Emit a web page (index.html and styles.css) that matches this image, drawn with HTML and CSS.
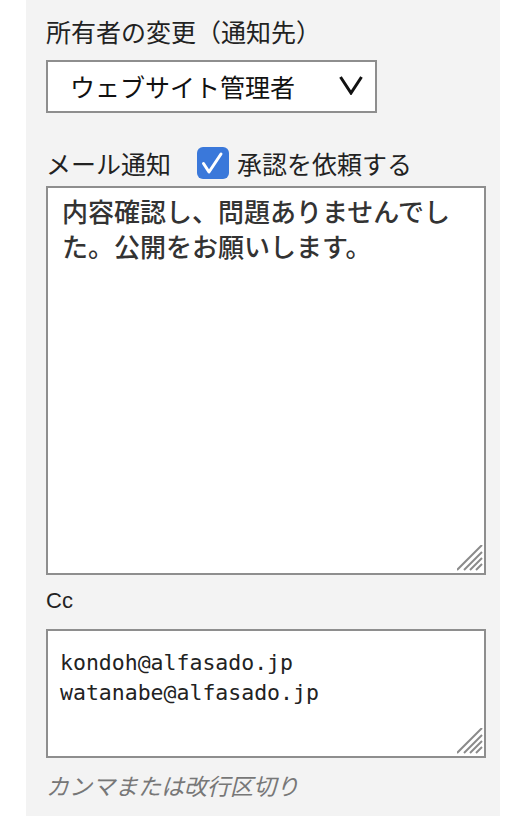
FILE: index.html
```html
<!DOCTYPE html>
<html lang="ja">

<head>
    <meta charset="UTF-8">
    <meta name="viewport" content="width=device-width, initial-scale=1.0">
    <title>所有者の変更</title>
    <link rel="stylesheet" href="styles.css">
</head>

<body>
    <div class="panel">
        <label class="field-label" for="owner">所有者の変更（通知先）</label>
        <div class="select-wrap">
            <select id="owner" name="owner">
                <option value="webmaster">ウェブサイト管理者</option>
            </select>
            <svg class="chevron" width="24" height="20" viewBox="0 0 24 20">
                <polyline points="1.5,2 12,18 22.5,2" fill="none" stroke="#111" stroke-width="3" />
            </svg>
        </div>

        <div class="notify-row">
            <span class="field-label">メール通知</span>
            <label class="check" for="request">
                <input type="checkbox" id="request" name="request" checked>
                <span class="check-box">
                    <svg width="32" height="32" viewBox="0 0 32 32">
                        <polyline points="6.5,16.5 12,25 24,7" fill="none" stroke="#fff" stroke-width="3" stroke-linecap="round" stroke-linejoin="round" />
                    </svg>
                </span>
                <span>承認を依頼する</span>
            </label>
        </div>

        <div class="area-wrap">
            <textarea id="message" name="message" class="message">内容確認し、問題ありませんでした。公開をお願いします。</textarea>
            <svg class="grip" width="26" height="26" viewBox="0 0 26 26">
                <g stroke="#8a8a8a" stroke-width="2">
                    <line x1="0" y1="25" x2="25" y2="0" />
                    <line x1="7" y1="25" x2="25" y2="7" />
                    <line x1="13" y1="25" x2="25" y2="13" />
                    <line x1="19" y1="25" x2="25" y2="19" />
                </g>
            </svg>
        </div>

        <label class="cc-label" for="cc">Cc</label>
        <div class="area-wrap">
            <textarea id="cc" name="cc" class="cc">kondoh@alfasado.jp
watanabe@alfasado.jp</textarea>
            <svg class="grip" width="26" height="26" viewBox="0 0 26 26">
                <g stroke="#8a8a8a" stroke-width="2">
                    <line x1="0" y1="25" x2="25" y2="0" />
                    <line x1="7" y1="25" x2="25" y2="7" />
                    <line x1="13" y1="25" x2="25" y2="13" />
                    <line x1="19" y1="25" x2="25" y2="19" />
                </g>
            </svg>
        </div>
        <p class="hint">カンマまたは改行区切り</p>
    </div>
</body>

</html>
```

FILE: styles.css
```css
body {
    margin: 0;
    padding: 0;
    background: #fff;
    font-family: "Noto Sans CJK JP", "Liberation Sans", sans-serif;
    color: #222;
}

.panel {
    margin-left: 26px;
    width: 434px;
    min-height: 801px;
    padding: 15px 20px 0;
    background: #f3f3f3;
}

.field-label {
    display: block;
    font-size: 25px;
    line-height: 32px;
    color: #222;
}

.select-wrap {
    position: relative;
    width: 331px;
    margin-top: 13px;
}

.select-wrap select {
    appearance: none;
    -webkit-appearance: none;
    display: block;
    width: 331px;
    height: 53px;
    margin: 0;
    padding: 0 0 0 22px;
    border: 2px solid #8e8e8e;
    border-radius: 0;
    background: #fff;
    font-family: "Noto Sans CJK JP", sans-serif;
    font-size: 25px;
    line-height: 49px;
    color: #111;
}

.chevron {
    position: absolute;
    right: 14px;
    top: 15px;
    pointer-events: none;
}

.notify-row {
    display: flex;
    align-items: center;
    height: 32px;
    margin-top: 34px;
}

.notify-row .field-label {
    margin-right: 26px;
}

.check {
    display: flex;
    align-items: center;
    font-size: 25px;
    line-height: 32px;
    color: #222;
}

.check input {
    display: none;
}

.check-box {
    width: 32px;
    height: 32px;
    margin-right: 8px;
    border-radius: 6px;
    background: #3a78da;
}

.check-box svg {
    display: block;
}

.area-wrap {
    position: relative;
    width: 440px;
}

textarea {
    display: block;
    box-sizing: border-box;
    width: 440px;
    margin: 0;
    border: 2px solid #8e8e8e;
    border-radius: 0;
    background: #fff;
    resize: none;
    outline: none;
}

.message {
    height: 389px;
    margin-top: 7px;
    padding: 5px 14px;
    font-family: "Noto Sans CJK JP", sans-serif;
    font-size: 26px;
    font-weight: 500;
    line-height: 35px;
    color: #333;
}

.grip {
    position: absolute;
    right: 3px;
    bottom: 4px;
    pointer-events: none;
}

.cc-label {
    display: block;
    margin-top: 14px;
    font-family: "Liberation Sans", sans-serif;
    font-size: 22px;
    line-height: 24px;
    color: #222;
}

.cc {
    height: 129px;
    margin-top: 16px;
    padding: 17px 12px;
    font-family: "DejaVu Sans Mono", monospace;
    font-size: 21.5px;
    line-height: 30px;
    color: #222;
}

.hint {
    margin: 12px 0 0;
    font-size: 23px;
    line-height: 30px;
    font-style: italic;
    color: #777;
}
```
